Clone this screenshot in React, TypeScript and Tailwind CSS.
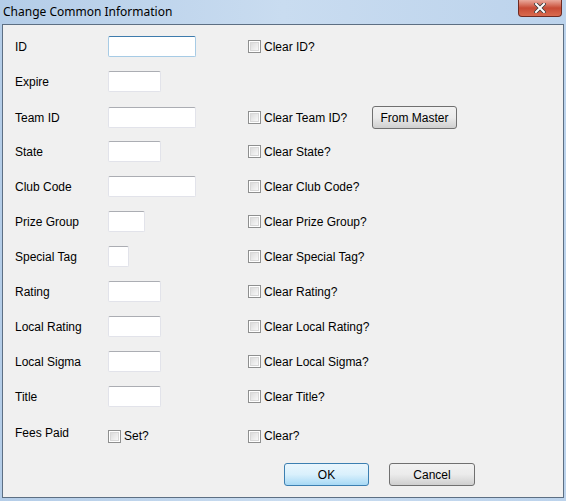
import React from 'react';

const font = { fontFamily: '"Liberation Sans", Arial, sans-serif' };

type Row = {
  label: string;
  field?: number;
  clear: string;
  extra?: boolean;
  focused?: boolean;
};

const rows: Row[] = [
  { label: 'ID', field: 88, clear: 'Clear ID?', focused: true },
  { label: 'Expire', field: 53, clear: '' },
  { label: 'Team ID', field: 88, clear: 'Clear Team ID?', extra: true },
  { label: 'State', field: 53, clear: 'Clear State?' },
  { label: 'Club Code', field: 88, clear: 'Clear Club Code?' },
  { label: 'Prize Group', field: 37, clear: 'Clear Prize Group?' },
  { label: 'Special Tag', field: 21, clear: 'Clear Special Tag?' },
  { label: 'Rating', field: 53, clear: 'Clear Rating?' },
  { label: 'Local Rating', field: 53, clear: 'Clear Local Rating?' },
  { label: 'Local Sigma', field: 53, clear: 'Clear Local Sigma?' },
  { label: 'Title', field: 53, clear: 'Clear Title?' },
];

const Check = () => (
  <span className="inline-block w-[13px] h-[13px] border border-[#8e8f8f] bg-white p-[1px] shrink-0">
    <span className="block w-full h-full bg-gradient-to-br from-[#dcdcdc] to-[#f8f8f8] border border-[#d8d8d8]" />
  </span>
);

const CheckLabel = ({ text }: { text: string }) => (
  <div className="flex items-center gap-[3px]">
    <Check />
    <span>{text}</span>
  </div>
);

const TextField = ({ width, focused }: { width: number; focused?: boolean }) => (
  <div
    className={
      focused
        ? 'h-[21px] bg-white border border-[#a7cbe5] border-t-[#3d7bad] rounded-[2px]'
        : 'h-[21px] bg-white border border-[#e2e3ea] border-t-[#abadb3] rounded-[2px]'
    }
    style={{ width }}
  />
);

const Button = ({ text, primary, w }: { text: string; primary?: boolean; w: string }) => (
  <div
    className={
      (primary
        ? 'border-[#3c7fb1] bg-gradient-to-b from-[#eaf6fd] via-[#d9f0fc] to-[#a7d9f5] '
        : 'border-[#707070] bg-gradient-to-b from-[#f2f2f2] via-[#ebebeb] to-[#cfcfcf] ') +
      w +
      ' h-[23px] border rounded-[3px] flex items-center justify-center text-black'
    }
  >
    {text}
  </div>
);

export default function App() {
  return (
    <div
      className="w-[566px] h-[501px] bg-gradient-to-r from-[#b4cde8] via-[#c9dcf0] to-[#bcd3ec] flex flex-col overflow-hidden text-[12px] text-black"
      style={font}
    >
      <div className="h-[24px] flex items-start justify-between shrink-0">
        <span
          className="pl-[3px] pt-[3px] text-[12px] text-black"
          style={{ fontFamily: '"Noto Sans", "Open Sans", sans-serif' }}
        >
          Change Common Information
        </span>
        <div className="mr-[4px] w-[44px] h-[17px] rounded-b-[4px] border border-t-0 border-[#6e2a22] bg-gradient-to-b from-[#e9a99c] via-[#c74a35] to-[#d96a4e] flex items-center justify-center">
          <svg width="12" height="10" viewBox="0 0 12 10">
            <path d="M2 1 L10 9 M10 1 L2 9" stroke="#3b3b3b" strokeWidth="3.6" strokeLinecap="square" />
            <path d="M2 1 L10 9 M10 1 L2 9" stroke="#ffffff" strokeWidth="2" strokeLinecap="square" />
          </svg>
        </div>
      </div>
      <div className="mx-[2px] mb-[3px] flex-1 border border-[#5d6f83] bg-[#f0f0f0] pl-[12px] pt-[11px] flex flex-col">
        <div className="flex flex-col gap-[14px]">
          {rows.map((r) => (
            <div key={r.label} className="h-[21px] grid grid-cols-[93px_140px_124px_auto] items-center">
              <span>{r.label}</span>
              <div>{r.field ? <TextField width={r.field} focused={r.focused} /> : null}</div>
              <div>{r.clear ? <CheckLabel text={r.clear} /> : null}</div>
              <div>{r.extra ? <Button text="From Master" w="w-[85px]" /> : null}</div>
            </div>
          ))}
          <div className="h-[21px] grid grid-cols-[93px_140px_124px_auto] items-center">
            <span>Fees Paid</span>
            <div className="pt-[6px]">
              <CheckLabel text="Set?" />
            </div>
            <div className="pt-[6px]">
              <CheckLabel text="Clear?" />
            </div>
          </div>
        </div>
        <div className="flex justify-end gap-[20px] pr-[88px] mt-[21px]">
          <Button text="OK" primary w="w-[85px]" />
          <Button text="Cancel" w="w-[86px]" />
        </div>
      </div>
    </div>
  );
}
